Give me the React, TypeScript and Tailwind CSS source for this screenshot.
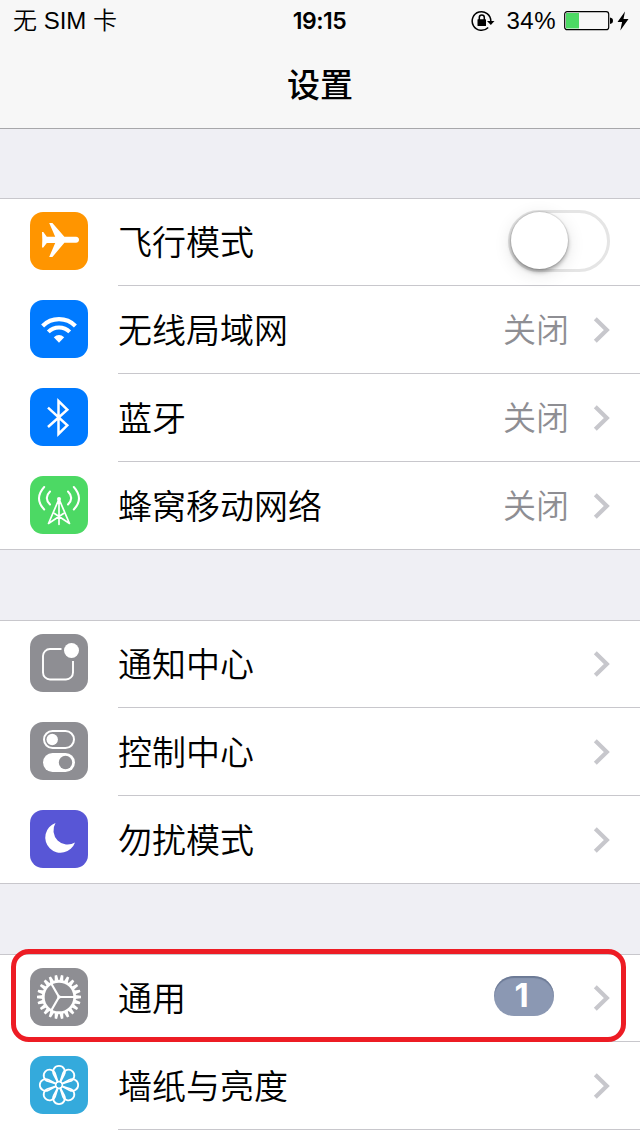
import type { ReactNode } from 'react';

interface SettingsRow {
  label: string;
  icon: ReactNode;
  color: string;
  value?: string;
  badge?: number;
  toggle?: boolean;
}

const GEAR_TEETH = Array.from({ length: 22 }, (_, i) => (i * 360) / 22);
const PETALS = [0, 45, 90, 135, 180, 225, 270, 315];

const PlaneIcon = () => (
  <path
    fill="#fff"
    d="M12 20h1.300l3.500 4.700h8.400L19.200 11h3.200l12 13.800H46q3 .3 3 3t-3 3H34.400L22.400 45h-3.200l6-14.100h-8.400l-3.500 4.700H12l.3-7.800z"
  />
);

const WifiIcon = () => (
  <g fill="none" stroke="#fff">
    <path strokeWidth="4.200" d="M12.600 25.900a23.200 23.200 0 0 1 32.800 0" />
    <path strokeWidth="4" d="M18.300 31.900a15.200 15.200 0 0 1 21.400 0" />
    <path fill="#fff" stroke="none" d="M23.800 37.300q5.200-4.400 10.400 0L29 42.800z" />
  </g>
);

const BluetoothIcon = () => (
  <path fill="none" stroke="#fff" strokeWidth="2.500" d="M18 19.700 37.300 37.400 28.500 46V13l8.800 8.600L18 39" />
);

const CellularIcon = () => (
  <g fill="none" stroke="#fff" strokeWidth="2" strokeLinecap="round">
    <path d="M14.200 11q-10.400 11.500 0 22.500M20 15.500q-6.400 6.500 0 13M43.800 11q10.400 11.500 0 22.500M38 15.500q6.400 6.500 0 13" />
    <path strokeWidth="1.700" strokeLinejoin="round" d="M29 23 18.500 47.500 33.500 37.500M29 23l10.500 24.500L24.500 37.500M29 23v25.300" />
    <circle cx="29" cy="23" r="2" fill="#fff" stroke="none" />
  </g>
);

const NotificationIcon = () => (
  <g>
    <path
      fill="none"
      stroke="#fff"
      strokeWidth="1.900"
      d="M31.500 15H20a7 7 0 0 0-7 7v16.500a7 7 0 0 0 7 7h16a7 7 0 0 0 7-7V27"
    />
    <circle cx="41.500" cy="16.500" r="7.500" fill="#fff" />
  </g>
);

const ControlIcon = () => (
  <g>
    <rect x="14" y="9" width="30" height="17" rx="8.500" fill="none" stroke="#fff" strokeWidth="2" />
    <circle cx="22.200" cy="17.500" r="5.700" fill="#fff" />
    <rect x="13" y="31" width="32" height="19" rx="9.500" fill="#fff" />
    <circle cx="35.500" cy="40.500" r="6.700" fill="#8e8e93" />
  </g>
);

const MoonIcon = () => (
  <path fill="#fff" d="M25.500 13A15.300 15.300 0 1 0 45 32.500A14.200 14.200 0 0 1 25.500 13z" />
);

const GearIcon = () => (
  <g transform="translate(29 29)">
    {GEAR_TEETH.map((angle) => (
      <path key={angle} fill="#fff" transform={`rotate(${angle})`} d="M16-2 22-1.200v2.400L16 2z" />
    ))}
    <circle r="15.700" fill="none" stroke="#fff" strokeWidth="2.700" />
    <path fill="none" stroke="#fff" strokeWidth="2.200" d="M0 0h15M0 0l-7.500-13M0 0l-7.500 13" />
    <circle r="1.800" fill="#fff" />
  </g>
);

const FlowerIcon = () => (
  <g transform="translate(29 29)" fill="none" stroke="#fff" strokeWidth="1.800">
    {PETALS.map((angle) => (
      <path
        key={angle}
        transform={`rotate(${angle})`}
        d="M-1.250-3 -5.200-10.500A5.900 5.900 0 1 1 5.200-10.500L1.250-3"
      />
    ))}
    <circle r="3.300" />
    <circle r="2.300" fill="#34aadc" stroke="none" />
  </g>
);

const groups: SettingsRow[][] = [
  [
    { label: '飞行模式', icon: <PlaneIcon />, color: 'bg-[#ff9500]', toggle: true },
    { label: '无线局域网', icon: <WifiIcon />, color: 'bg-[#007aff]', value: '关闭' },
    { label: '蓝牙', icon: <BluetoothIcon />, color: 'bg-[#007aff]', value: '关闭' },
    { label: '蜂窝移动网络', icon: <CellularIcon />, color: 'bg-[#4cd964]', value: '关闭' },
  ],
  [
    { label: '通知中心', icon: <NotificationIcon />, color: 'bg-[#8e8e93]' },
    { label: '控制中心', icon: <ControlIcon />, color: 'bg-[#8e8e93]' },
    { label: '勿扰模式', icon: <MoonIcon />, color: 'bg-[#5856d6]' },
  ],
  [
    { label: '通用', icon: <GearIcon />, color: 'bg-[#8e8e93]', badge: 1 },
    { label: '墙纸与亮度', icon: <FlowerIcon />, color: 'bg-[#34aadc]' },
  ],
];

function StatusBar() {
  return (
    <div className="grid h-[41px] grid-cols-3 items-center pr-[11px] pl-[13px] text-[24px] leading-10">
      <span className="pt-px font-[350] whitespace-nowrap">无 SIM 卡</span>
      <span className="pr-[3px] text-center font-['Inter'] text-[23px] font-semibold tracking-[-0.5px]">19:15</span>
      <div className="flex items-center justify-end">
        <svg width="24" height="22" viewBox="0 0 24 22" className="mr-[11px] shrink-0">
          <path fill="none" stroke="#000" strokeWidth="1.500" d="M17.200 17.500A9.300 9.300 0 1 1 19.800 11" />
          <path d="M16 11h7.500l-3.700 4z" />
          <rect x="6.500" y="9.300" width="8.500" height="6.700" rx="0.500" />
          <path fill="none" stroke="#000" strokeWidth="1.500" d="M8.300 10V7.500a2.500 2.500 0 0 1 5 0V10" />
        </svg>
        <span className="pt-px tracking-[0.5px]">34%</span>
        <svg width="65" height="20" viewBox="0 0 65 20" className="ml-2 shrink-0">
          <rect x="0.700" y="0.700" width="44" height="18" rx="2.500" fill="none" stroke="#000" strokeWidth="1.200" />
          <rect x="2" y="2" width="13" height="15.400" fill="#4cd964" />
          <path d="M46 6.500q3 .5 3 3.200t-3 3.200z" />
          <path d="M61 0.500 53.500 11h4.600L56.300 19.500l8.200-11.500h-5z" />
        </svg>
      </div>
    </div>
  );
}

function Toggle() {
  return (
    <div className="mt-[-2px] h-[62px] w-[102px] rounded-full border-[3px] border-[#e5e5e5]">
      <div className="-mt-px h-[57px] w-[57px] rounded-full bg-white shadow-[0_0_1px_1px_rgba(0,0,0,0.1),0_3px_4px_rgba(0,0,0,0.3),0_4px_18px_rgba(0,0,0,0.12)]" />
    </div>
  );
}

function Row({ row, last }: { row: SettingsRow; last: boolean }) {
  return (
    <div className="flex h-[88px] pl-[30px]">
      <div className={`mt-[14px] h-[58px] w-[58px] shrink-0 rounded-[13px] ${row.color}`}>
        <svg width="58" height="58" viewBox="0 0 58 58">{row.icon}</svg>
      </div>
      <div className={`ml-[30px] flex flex-1 items-center border-b pr-[30px] ${last ? 'border-transparent' : 'border-[#c8c7cc]'}`}>
        <span className="flex-1 pt-[3px] text-[34px] leading-none font-[350]">{row.label}</span>
        {row.toggle && <Toggle />}
        {row.value && <span className="pt-[2px] text-[33px] leading-none font-[350] text-[#8e8e93]">{row.value}</span>}
        {row.badge && (
          <span className="mt-[-3px] h-10 w-[60px] rounded-full bg-[#8b98b3] pr-[5px] text-center font-['Inter'] text-[33px] leading-[38px] font-bold text-white shadow-[inset_0_2px_1px_rgba(60,75,105,0.4)]">
            {row.badge}
          </span>
        )}
        {!row.toggle && (
          <svg width="17" height="26" viewBox="0 0 17 26" className={`mt-px ${row.badge ? 'ml-[39px]' : 'ml-6'}`}>
            <path fill="none" stroke="#c7c7cc" strokeWidth="4.200" d="M2.300 1.800 13.800 13 2.300 24.200" />
          </svg>
        )}
      </div>
    </div>
  );
}

export default function App() {
  return (
    <div className="h-[1136px] w-[640px] overflow-hidden bg-[#efeff4] font-['Liberation_Sans','Noto_Sans_CJK_SC',sans-serif] text-black">
      <header className="h-[129px] border-b border-[#a7a7aa] bg-[#f7f7f7]">
        <StatusBar />
        <h1 className="pt-[21px] text-center text-[33px] leading-[48px] font-medium">设置</h1>
      </header>

      <main className="flex flex-col gap-[70px] pt-[69px]">
        {groups.map((rows, index) => (
          <section
            key={index}
            className={`relative bg-white ${index < 2 ? 'shadow-[inset_0_1px_0_#c8c7cc,inset_0_-1px_0_#c8c7cc]' : 'h-[182px] shadow-[inset_0_1px_0_#c8c7cc]'}`}
          >
            {rows.map((row, i) => (
              <Row key={row.label} row={row} last={index < 2 && i === rows.length - 1} />
            ))}
            {/* Red marker around the General row */}
            {index === 2 && (
              <div className="absolute top-[-5px] left-[11px] h-[93px] w-[615px] rounded-[18px] border-[5px] border-[#ed1c24]" />
            )}
          </section>
        ))}
      </main>
    </div>
  );
}
